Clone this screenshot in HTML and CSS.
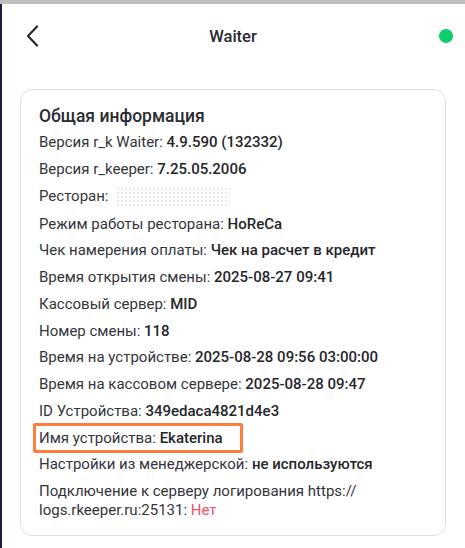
FILE: index.html
```html
<!DOCTYPE html>
<html lang="ru">
<head>
<meta charset="utf-8">
<link rel="stylesheet" href="styles.css">
</head>
<body>
<div class="statusbar"></div>
<div class="screen">
  <header class="header">
    <button class="back" aria-label="Назад">
      <svg width="14" height="22" viewBox="0 0 14 22"><polyline points="11,1.5 2,11 11,20.5" fill="none" stroke="#272a33" stroke-width="2.2" stroke-linecap="round" stroke-linejoin="round"/></svg>
    </button>
    <div class="title">Waiter</div>
    <span class="online"></span>
  </header>
  <section class="card">
    <h2 class="card-title">Общая информация</h2>
    <div class="rows">
      <p class="row">Версия r_k Waiter: <b>4.9.590 (132332)</b></p>
      <p class="row">Версия r_keeper: <b>7.25.05.2006</b></p>
      <p class="row">Ресторан: <span class="hidden-value"></span></p>
      <p class="row">Режим работы ресторана: <b>HoReCa</b></p>
      <p class="row">Чек намерения оплаты: <b>Чек на расчет в кредит</b></p>
      <p class="row">Время открытия смены: <b>2025-08-27 09:41</b></p>
      <p class="row">Кассовый сервер: <b>MID</b></p>
      <p class="row">Номер смены: <b>118</b></p>
      <p class="row">Время на устройстве: <b>2025-08-28 09:56 03:00:00</b></p>
      <p class="row">Время на кассовом сервере: <b>2025-08-28 09:47</b></p>
      <p class="row">ID Устройства: <b>349edaca4821d4e3</b></p>
      <p class="row row-highlight">Имя устройства: <b>Ekaterina</b></p>
      <p class="row">Настройки из менеджерской: <b>не используются</b></p>
      <p class="row">Подключение к серверу логирования https://<br>logs.rkeeper.ru:25131: <span class="no">Нет</span></p>
    </div>
  </section>
</div>
</body>
</html>
```
FILE: styles.css
```css
* { box-sizing: border-box; }
html, body { margin: 0; padding: 0; background: #fff; }
body {
  font-family: Roboto, "Noto Sans", sans-serif;
  color: #34353b;
  width: 465px;
  height: 548px;
  overflow: hidden;
}
.statusbar { height: 4px; background: #bebebe; }
.screen {
  border-left: 2px solid #1b1d3a;
  height: 544px;
  padding: 0 19px 0 18px;
}
.header {
  height: 64px;
  display: flex;
  align-items: center;
  justify-content: space-between;
  position: relative;
}
.back {
  border: 0; background: none; padding: 0;
  margin-left: 6px;
  width: 14px; height: 22px;
  display: flex;
}
.title {
  position: absolute;
  left: 0; right: 0;
  text-align: center;
  font-size: 16.5px;
  font-weight: 500;
  color: #272a33;
  pointer-events: none;
}
.online {
  width: 14px; height: 14px;
  border-radius: 50%;
  background: #0ccf6c;
  margin-right: -7px;
}
.card {
  margin-top: 21px;
  border: 1px solid #dfdfee;
  border-radius: 12px;
  padding: 15px 18px 15px 18px;
}
.card-title {
  margin: 0 0 6px;
  font-size: 17.5px;
  font-weight: 500;
  color: #2b2c33;
  line-height: 22px;
}
.rows { display: flex; flex-direction: column; gap: 8px; }
.row {
  margin: 0;
  font-size: 15px;
  line-height: 18.75px;
}
.row b { font-weight: 500; color: #25262c; }
.row-highlight {
  position: relative;
  width: max-content;
}
.row-highlight::after {
  content: "";
  position: absolute;
  top: -6px; bottom: -6px;
  left: -6px; right: -20px;
  border: 3px solid #ff7e3d;
  border-radius: 2px;
}
.hidden-value {
  display: inline-block;
  width: 114px;
  height: 20px;
  margin-left: 4px;
  vertical-align: -6px;
  background-image: radial-gradient(circle, #dcdce2 0.6px, transparent 0.9px);
  background-size: 4px 4px;
}
.no { color: #f2506b; }
```
